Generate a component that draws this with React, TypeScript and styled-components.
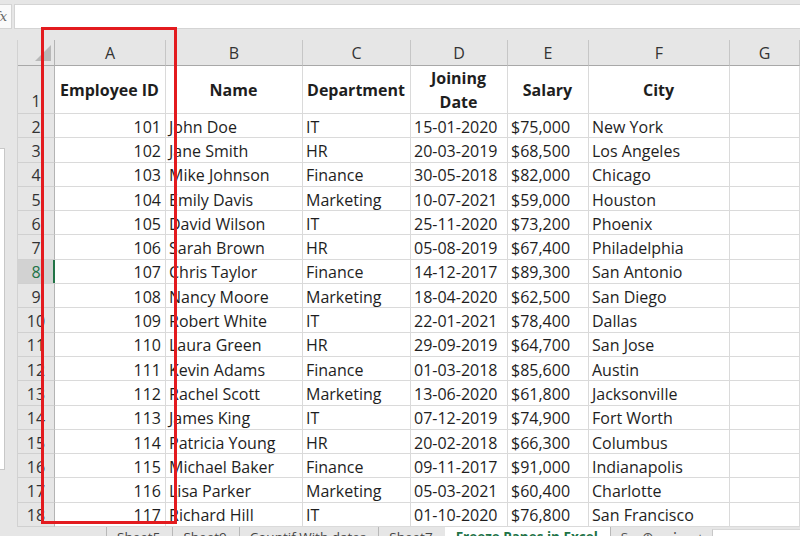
import React from 'react';
import styled, { createGlobalStyle } from 'styled-components';

const GlobalStyle = createGlobalStyle`
  html, body {
    margin: 0;
    padding: 0;
    background: #e6e6e6;
  }
  * {
    box-sizing: border-box;
  }
`;

const columns = ['A', 'B', 'C', 'D', 'E', 'F', 'G'];

const employees = [
  ['101', 'John Doe', 'IT', '15-01-2020', '$75,000', 'New York'],
  ['102', 'Jane Smith', 'HR', '20-03-2019', '$68,500', 'Los Angeles'],
  ['103', 'Mike Johnson', 'Finance', '30-05-2018', '$82,000', 'Chicago'],
  ['104', 'Emily Davis', 'Marketing', '10-07-2021', '$59,000', 'Houston'],
  ['105', 'David Wilson', 'IT', '25-11-2020', '$73,200', 'Phoenix'],
  ['106', 'Sarah Brown', 'HR', '05-08-2019', '$67,400', 'Philadelphia'],
  ['107', 'Chris Taylor', 'Finance', '14-12-2017', '$89,300', 'San Antonio'],
  ['108', 'Nancy Moore', 'Marketing', '18-04-2020', '$62,500', 'San Diego'],
  ['109', 'Robert White', 'IT', '22-01-2021', '$78,400', 'Dallas'],
  ['110', 'Laura Green', 'HR', '29-09-2019', '$64,700', 'San Jose'],
  ['111', 'Kevin Adams', 'Finance', '01-03-2018', '$85,600', 'Austin'],
  ['112', 'Rachel Scott', 'Marketing', '13-06-2020', '$61,800', 'Jacksonville'],
  ['113', 'James King', 'IT', '07-12-2019', '$74,900', 'Fort Worth'],
  ['114', 'Patricia Young', 'HR', '20-02-2018', '$66,300', 'Columbus'],
  ['115', 'Michael Baker', 'Finance', '09-11-2017', '$91,000', 'Indianapolis'],
  ['116', 'Lisa Parker', 'Marketing', '05-03-2021', '$60,400', 'Charlotte'],
  ['117', 'Richard Hill', 'IT', '01-10-2020', '$76,800', 'San Francisco'],
];

const headings = ['Employee ID', 'Name', 'Department', 'Joining Date', 'Salary', 'City', ''];

const tabs = ['Sheet5', 'Sheet9', 'Countif With dates', 'Sheet7'];

const Window = styled.div`
  position: relative;
  width: 800px;
  height: 536px;
  overflow: hidden;
  display: flex;
  flex-direction: column;
  background: #e6e6e6;
  font-family: 'Open Sans', 'Liberation Sans', sans-serif;
  color: #1e1e1e;
`;

/* formula bar */
const FormulaBar = styled.div`
  display: flex;
  align-items: stretch;
  gap: 2px;
  height: 40px;
  padding: 4px 0 11px 0;
  flex-shrink: 0;
`;

const FxBox = styled.div`
  width: 28px;
  margin-left: -16px;
  display: flex;
  align-items: center;
  justify-content: flex-end;
  padding-right: 4px;
  background: #fafafa;
  border: 1px solid #d4d4d4;
  font-family: 'DejaVu Serif', serif;
  font-style: italic;
  font-size: 13px;
  color: #666;
`;

const FormulaInput = styled.div`
  flex: 1;
  background: #fff;
  border: 1px solid #d4d4d4;
  border-right: none;
`;

/* sheet body */
const SheetArea = styled.div`
  display: flex;
  flex-shrink: 0;
`;

const LeftStrip = styled.div`
  width: 18px;
  flex-shrink: 0;
  border-right: 1px solid #d2d2d2;
  padding-top: 108px;
`;

const LeftPane = styled.div`
  width: 5px;
  height: 322px;
  background: #fff;
  border: 1px solid #c8c8c8;
  border-left: none;
`;

const Grid = styled.div`
  display: grid;
  grid-template-columns: 37px 111px 137px 108px 97px 81px 141px 70px;
  grid-template-rows: 26px 48px repeat(17, 24.3px);
  background: #fff;
`;

const Corner = styled.div`
  position: relative;
  background: #e6e6e6;
  border-right: 1px solid #b4b4b4;
  border-bottom: 1px solid #a8a8a8;

  &::after {
    content: '';
    position: absolute;
    right: 3px;
    bottom: 4px;
    width: 0;
    height: 0;
    border-left: 16px solid transparent;
    border-bottom: 16px solid #b8b8b8;
  }
`;

const ColHead = styled.div`
  display: flex;
  align-items: center;
  justify-content: center;
  background: #e6e6e6;
  border-right: 1px solid #c6c6c6;
  border-bottom: 1px solid #a8a8a8;
  font-size: 16px;
  color: #333;
  padding-top: 1px;
`;

const RowHead = styled.div<{ $active?: boolean; $bottom?: boolean }>`
  position: relative;
  display: flex;
  align-items: ${(p) => (p.$bottom ? 'flex-end' : 'center')};
  justify-content: center;
  padding-top: ${(p) => (p.$bottom ? '0' : '2px')};
  background: ${(p) => (p.$active ? '#d2d2d2' : '#e6e6e6')};
  border-right: 1px solid #b4b4b4;
  border-bottom: 1px solid #d0d0d0;
  font-size: 16px;
  line-height: 24px;
  color: ${(p) => (p.$active ? '#217346' : '#333')};

  &::after {
    content: '';
    display: ${(p) => (p.$active ? 'block' : 'none')};
    position: absolute;
    top: 0;
    bottom: 0;
    right: -1px;
    width: 2px;
    background: #217346;
  }
`;

const Cell = styled.div<{ $align?: 'left' | 'right' | 'center'; $bold?: boolean }>`
  display: flex;
  align-items: center;
  justify-content: ${(p) =>
    p.$align === 'right' ? 'flex-end' : p.$align === 'center' ? 'center' : 'flex-start'};
  text-align: ${(p) => p.$align ?? 'left'};
  padding: ${(p) => (p.$bold ? '1px' : '2px')} 4px 0 3px;
  border-right: 1px solid #dadada;
  border-bottom: 1px solid #dadada;
  font-size: 16px;
  font-weight: ${(p) => (p.$bold ? 700 : 400)};
  line-height: 24px;
  white-space: nowrap;
  overflow: hidden;
`;

const WrapText = styled.span`
  white-space: normal;
  display: block;
  width: 60px;
`;

/* sheet tabs */
const TabBar = styled.div`
  display: flex;
  align-items: stretch;
  height: 30px;
  padding-left: 106px;
  background: #e6e6e6;
  font-size: 13.5px;
  color: #444;
`;

const Tab = styled.div<{ $active?: boolean }>`
  padding: 1px 12px 0 10px;
  border-left: 1px solid ${(p) => (p.$active ? 'transparent' : '#b8b8b8')};
  background: ${(p) => (p.$active ? '#fff' : 'transparent')};
  color: ${(p) => (p.$active ? '#217346' : '#444')};
  font-weight: ${(p) => (p.$active ? 700 : 400)};
  white-space: nowrap;
`;

const TabTools = styled.div`
  display: flex;
  align-items: flex-start;
  gap: 14px;
  padding: 1px 8px 0 10px;
  border-left: 1px solid #b8b8b8;
  color: #555;
`;

const ScrollTrack = styled.div`
  flex: 1;
  margin-top: 2px;
  background: #fff;
  border-left: 1px solid #c8c8c8;
  border-top: 1px solid #d8d8d8;
`;

const Highlight = styled.div`
  position: absolute;
  left: 41px;
  top: 27px;
  width: 136px;
  height: 497px;
  border: 3px solid #e31b1f;
  pointer-events: none;
`;

const App = () => {
  return (
    <>
      <GlobalStyle />
      <Window>
        <FormulaBar>
          <FxBox>fx</FxBox>
          <FormulaInput />
        </FormulaBar>

        <SheetArea>
          <LeftStrip>
            <LeftPane />
          </LeftStrip>
          <Grid>
            <Corner />
            {columns.map((c) => (
              <ColHead key={c}>{c}</ColHead>
            ))}

            <RowHead $bottom>1</RowHead>
            {headings.map((h, i) => (
              <Cell key={i} $align="center" $bold>
                {h === 'Joining Date' ? <WrapText>{h}</WrapText> : h}
              </Cell>
            ))}

            {employees.map((row, r) => (
              <React.Fragment key={row[0]}>
                <RowHead $active={r + 2 === 8}>{r + 2}</RowHead>
                {row.map((v, i) => (
                  <Cell key={i} $align={i === 0 ? 'right' : 'left'}>
                    {v}
                  </Cell>
                ))}
                <Cell />
              </React.Fragment>
            ))}
          </Grid>
        </SheetArea>

        <TabBar>
          {tabs.map((t) => (
            <Tab key={t}>{t}</Tab>
          ))}
          <Tab $active>Freeze Panes in Excel</Tab>
          <TabTools>
            <span>S</span>
            <span>⊕</span>
            <span>⋮</span>
            <span>+</span>
          </TabTools>
          <ScrollTrack />
        </TabBar>

        <Highlight />
      </Window>
    </>
  );
}

export default App;
